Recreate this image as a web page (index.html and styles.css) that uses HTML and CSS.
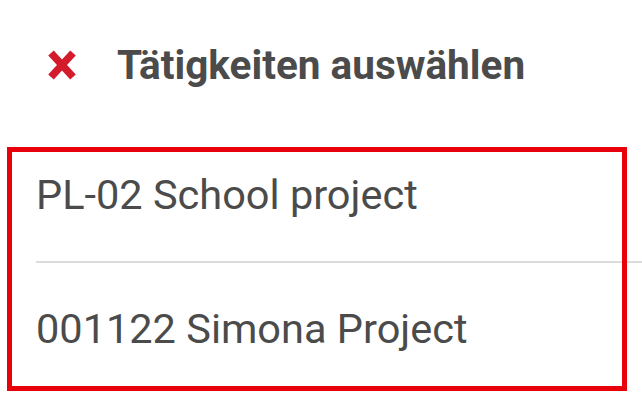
FILE: index.html
```html
<!DOCTYPE html>
<html lang="de">
<head>
<meta charset="utf-8">
<link rel="stylesheet" href="styles.css">
</head>
<body>
<header class="bar">
  <svg class="close" viewBox="0 0 30 32" width="30" height="32" aria-hidden="true">
    <path d="M4 4 L26 28 M26 4 L4 28" stroke="#d31b2c" stroke-width="7.5" stroke-linecap="butt"/>
  </svg>
  <h1 class="title">Tätigkeiten auswählen</h1>
</header>
<ul class="list">
  <li class="item">PL-02 School project</li>
  <li class="item">001122 Simona Project</li>
</ul>
<div class="highlight"></div>
</body>
</html>
```
FILE: styles.css
```css
html, body {
  margin: 0;
  padding: 0;
  background: #ffffff;
  font-family: Roboto, "Liberation Sans", sans-serif;
  color: #4b4b4b;
}
.bar {
  display: flex;
  align-items: center;
  height: 129px;
  padding-left: 47px;
  box-sizing: border-box;
}
.close {
  flex: none;
  display: block;
}
.title {
  margin: 0 0 0 40px;
  font-size: 40.5px;
  font-weight: 700;
  line-height: 48px;
  color: #4b4b4b;
}
.list {
  list-style: none;
  margin: 0;
  padding: 0 0 0 36px;
}
.item {
  font-size: 41.5px;
  line-height: 48px;
  padding: 42px 0 42px 0;
}
.item + .item {
  border-top: 2px solid #dcdcdc;
}
.highlight {
  position: absolute;
  left: 7px;
  top: 147px;
  width: 620px;
  height: 244px;
  box-sizing: border-box;
  border: 5px solid #e8000b;
}
```
